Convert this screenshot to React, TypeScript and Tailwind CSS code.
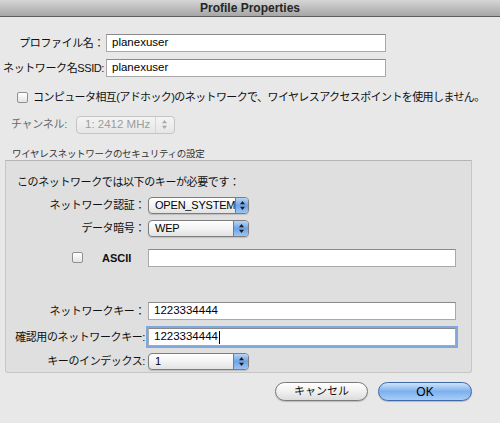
import type { ReactNode } from 'react';

const font = { fontFamily: '"Liberation Sans", "Noto Sans CJK JP", sans-serif' };

function Arrows({ color }: { color: string }) {
  return (
    <svg width="7" height="11" viewBox="0 0 7 11">
      <path d="M3.5 1 L6 4.2 H1 Z" fill={color} />
      <path d="M3.5 10 L6 6.8 H1 Z" fill={color} />
    </svg>
  );
}

function PopUp({ value, width, disabled }: { value: string; width: string; disabled?: boolean }) {
  if (disabled) {
    return (
      <div
        className={`${width} flex h-[18px] items-center justify-between rounded-[4px] border border-[#c4c4c4] bg-gradient-to-b from-[#f4f4f4] to-[#e6e6e6] pl-[8px] pr-[6px] text-[11.5px] text-[#9c9c9c]`}
      >
        <span>{value}</span>
        <span className="flex h-full items-center border-l border-[#d6d6d6] pl-[5px]">
          <Arrows color="#a8a8a8" />
        </span>
      </div>
    );
  }
  return (
    <div
      className={`${width} flex h-[17px] items-stretch overflow-hidden rounded-[4px] border border-[#7d7d7d] bg-gradient-to-b from-[#ffffff] via-[#f3f3f3] to-[#e2e2e2] text-[11px] text-black shadow-[0_1px_1px_rgba(0,0,0,0.15)]`}
    >
      <span className="flex flex-1 items-center pl-[6px] tracking-[-0.2px]">{value}</span>
      <span className="flex w-[15px] items-center justify-center border-l border-[#5a7fb5] bg-gradient-to-b from-[#b8d4f5] via-[#6ea3e6] to-[#9cc4f2]">
        <Arrows color="#1a1a1a" />
      </span>
    </div>
  );
}

function TextField({ value, width, focused, caret }: { value?: string; width: string; focused?: boolean; caret?: boolean }) {
  return (
    <div
      className={`${width} flex h-[18px] items-center border border-[#a9a9a9] border-t-[#8a8a8a] bg-white pl-[5px] text-[11.5px] text-black ${
        focused ? 'ring-[2px] ring-[#7fa8dc]' : ''
      }`}
    >
      <span>{value}</span>
      {caret && <span className="ml-[1px] h-[13px] w-px bg-black" />}
    </div>
  );
}

function CheckBox() {
  return (
    <span className="inline-block h-[11px] w-[11px] shrink-0 rounded-[2px] border border-[#8f8f8f] bg-gradient-to-b from-white to-[#e4e4e4]" />
  );
}

function Row({ label, labelWidth, children, className = '' }: { label: string; labelWidth: string; children: ReactNode; className?: string }) {
  return (
    <div className={`flex items-center ${className}`}>
      <span className={`${labelWidth} shrink-0 whitespace-nowrap text-right text-[11px] tracking-[-0.4px] text-[#111]`}>{label}</span>
      {children}
    </div>
  );
}

export default function App() {
  return (
    <div className="h-[423px] w-[500px] overflow-hidden bg-[#e8e8e8]" style={font}>
      <div className="flex h-[17px] items-center justify-center border-b border-[#5c5c5c] bg-gradient-to-b from-[#d6d6d6] to-[#a6a6a6] text-[12px] font-bold text-[#262626]">
        Profile Properties
      </div>

      <Row label="プロファイル名：" labelWidth="w-[104px]" className="mt-[17px]">
        <div className="ml-[2px]">
          <TextField value="planexuser" width="w-[280px]" />
        </div>
      </Row>
      <Row label="ネットワーク名SSID:" labelWidth="w-[104px]" className="mt-[7px]">
        <div className="ml-[2px]">
          <TextField value="planexuser" width="w-[280px]" />
        </div>
      </Row>

      <div className="mt-[12px] flex items-center gap-[5px] pl-[17px] text-[11px] tracking-[-0.6px] text-[#111]">
        <CheckBox />
        <span className="whitespace-nowrap">コンピュータ相互(アドホック)のネットワークで、ワイヤレスアクセスポイントを使用しません。</span>
      </div>

      <div className="mt-[10px] flex items-center pl-[11px]">
        <span className="w-[65px] text-[11px] tracking-[-0.3px] text-[#6a6a6a]">チャンネル:</span>
        <PopUp value="1: 2412 MHz" width="w-[99px]" disabled />
      </div>

      <div className="mt-[14px] pl-[12px] text-[9.5px] leading-[11px] tracking-[-0.3px] text-[#333]">ワイヤレスネットワークのセキュリティの設定</div>

      <div className="ml-[5px] mt-[1px] h-[213px] w-[467px] rounded-b-[3px] border border-[#c6c6c6] border-t-[#b4b4b4] bg-[#dfdfdf]">
        <div className="mt-[13px] pl-[11px] text-[11px] tracking-[-0.4px] text-[#111]">このネットワークでは以下のキーが必要です：</div>

        <Row label="ネットワーク認証：" labelWidth="w-[139px]" className="mt-[7px]">
          <div className="ml-[3px]">
            <PopUp value="OPEN_SYSTEM" width="w-[101px]" />
          </div>
        </Row>
        <Row label="データ暗号：" labelWidth="w-[139px]" className="mt-[6px]">
          <div className="ml-[3px]">
            <PopUp value="WEP" width="w-[101px]" />
          </div>
        </Row>

        <div className="mt-[9px] flex items-center">
          <span className="ml-[66px]">
            <CheckBox />
          </span>
          <span className="ml-[19px] w-[46px] text-[11px] font-semibold text-[#111]">ASCII</span>
          <TextField width="w-[308px]" />
        </div>

        <Row label="ネットワークキー：" labelWidth="w-[139px]" className="mt-[32px]">
          <div className="ml-[3px]">
            <TextField value="1223334444" width="w-[308px]" />
          </div>
        </Row>
        <Row label="確認用のネットワークキー:" labelWidth="w-[139px]" className="mt-[8px]">
          <div className="ml-[3px]">
            <TextField value="1223334444" width="w-[308px]" focused caret />
          </div>
        </Row>
        <Row label="キーのインデックス:" labelWidth="w-[139px]" className="mt-[7px]">
          <div className="ml-[3px]">
            <PopUp value="1" width="w-[101px]" />
          </div>
        </Row>
      </div>

      <div className="mt-[9px] flex w-[472px] justify-end gap-[10px]">
        <button className="h-[19px] w-[93px] rounded-full border border-[#7a7a7a] bg-gradient-to-b from-[#ffffff] via-[#f0f0f0] to-[#dcdcdc] text-[11px] text-[#111] shadow-[0_1px_1px_rgba(0,0,0,0.2)]">
          キャンセル
        </button>
        <button className="h-[19px] w-[94px] rounded-full border border-[#3f68a8] bg-gradient-to-b from-[#cfe3fa] via-[#7cb0ee] to-[#a9cdf6] text-[12px] text-black shadow-[0_1px_1px_rgba(0,0,0,0.2)]">
          OK
        </button>
      </div>
    </div>
  );
}
